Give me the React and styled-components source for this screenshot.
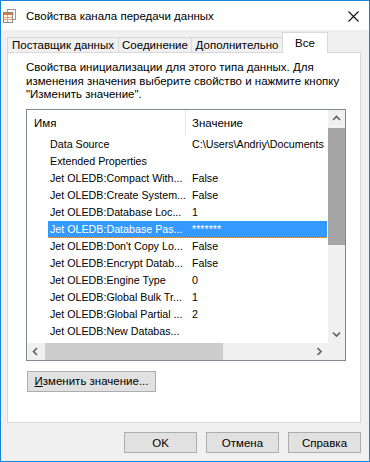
import React from 'react'
import styled, { createGlobalStyle } from 'styled-components'

const GlobalStyle = createGlobalStyle`
  html, body {
    margin: 0;
    padding: 0;
    background: #fff;
  }
  body {
    font-family: "Liberation Sans", Arial, sans-serif;
  }
`

const rows = [
  { name: 'Data Source', value: 'C:\\Users\\Andriy\\Documents' },
  { name: 'Extended Properties', value: '' },
  { name: 'Jet OLEDB:Compact With...', value: 'False' },
  { name: 'Jet OLEDB:Create System...', value: 'False' },
  { name: 'Jet OLEDB:Database Loc...', value: '1' },
  { name: 'Jet OLEDB:Database Pas...', value: '*******', selected: true },
  { name: "Jet OLEDB:Don't Copy Lo...", value: 'False' },
  { name: 'Jet OLEDB:Encrypt Datab...', value: 'False' },
  { name: 'Jet OLEDB:Engine Type', value: '0' },
  { name: 'Jet OLEDB:Global Bulk Tr...', value: '1' },
  { name: 'Jet OLEDB:Global Partial ...', value: '2' },
  { name: 'Jet OLEDB:New Databas...', value: '' }
]

const tabs = [
  { label: 'Поставщик данных', width: 112 },
  { label: 'Соединение', width: 74 },
  { label: 'Дополнительно', width: 92 },
  { label: 'Все', width: 46, active: true }
]

const Chevron = ({ dir }) => {
  const d = {
    up: 'M1 5 L4.5 1.5 L8 5',
    down: 'M1 1.5 L4.5 5 L8 1.5',
    left: 'M5 1 L1.5 4.5 L5 8',
    right: 'M1.5 1 L5 4.5 L1.5 8'
  }[dir]
  const vertical = dir === 'up' || dir === 'down'
  return (
    <svg width={vertical ? 9 : 7} height={vertical ? 7 : 9} viewBox={vertical ? '0 0 9 7' : '0 0 7 9'}>
      <path d={d} fill="none" stroke="#606060" strokeWidth="1.6" />
    </svg>
  )
}

const DialogIcon = () => (
  <svg width="13" height="14" viewBox="0 0 13 14">
    <rect x="4.5" y="0.5" width="8" height="10" fill="#fff" stroke="#9a9a9a" />
    <path d="M6 3.5 H11 M6 5.5 H11" stroke="#c4c4c4" />
    <rect x="0.5" y="3.5" width="9" height="10" fill="#fff" stroke="#8a8a8a" />
    <rect x="1" y="4" width="8" height="2" fill="#e0773a" />
    <path d="M1 8.5 H9 M1 10.5 H9 M4.5 6 V13" stroke="#e8a070" />
  </svg>
)

export default function App() {
  return (
    <>
      <GlobalStyle />
      <Window>
        <TitleBar>
          <TitleIcon>
            <DialogIcon />
          </TitleIcon>
          <Title>Свойства канала передачи данных</Title>
          <Close>
            <svg width="11" height="11" viewBox="0 0 11 11">
              <path d="M0.5 0.5 L10.5 10.5 M10.5 0.5 L0.5 10.5" stroke="#111" strokeWidth="1.1" />
            </svg>
          </Close>
        </TitleBar>
        <Body>
          <TabRow>
            {tabs.map(t => (
              <Tab key={t.label} $active={t.active} $width={t.width}>
                {t.label}
              </Tab>
            ))}
          </TabRow>
          <Panel>
            <Desc>
              <span>Свойства инициализации для этого типа данных. Для</span>
              <span>изменения значения выберите свойство и нажмите кнопку</span>
              <span>"Изменить значение".</span>
            </Desc>
            <ListView>
              <ListArea>
                <Header>
                  <HeaderCell $width={159} $divider>
                    Имя
                  </HeaderCell>
                  <HeaderCell>Значение</HeaderCell>
                </Header>
                {rows.map(r => (
                  <Row key={r.name} $selected={r.selected}>
                    <NameCell>{r.name}</NameCell>
                    <ValueCell>{r.value}</ValueCell>
                  </Row>
                ))}
              </ListArea>
              <VScroll>
                <ArrowBox>
                  <Chevron dir="up" />
                </ArrowBox>
                <VThumb />
                <Spacer />
                <ArrowBox>
                  <Chevron dir="down" />
                </ArrowBox>
              </VScroll>
              <HScroll>
                <ArrowBox>
                  <Chevron dir="left" />
                </ArrowBox>
                <HThumb />
                <Spacer />
                <ArrowBox>
                  <Chevron dir="right" />
                </ArrowBox>
              </HScroll>
              <Corner />
            </ListView>
            <EditButton>
              <u>И</u>зменить значение...
            </EditButton>
          </Panel>
          <Footer>
            <Button>OK</Button>
            <Button>Отмена</Button>
            <Button>Справка</Button>
          </Footer>
        </Body>
      </Window>
    </>
  )
}

const Window = styled.div`
  width: 370px;
  height: 462px;
  box-sizing: border-box;
  border: 1px solid #1883d7;
  display: flex;
  flex-direction: column;
  background: #f0f0f0;
  font-size: 11.5px;
  color: #000;
`

const TitleBar = styled.div`
  height: 29px;
  flex: none;
  display: flex;
  align-items: center;
  background: #fff;
  padding-left: 2px;
`

const TitleIcon = styled.div`
  width: 13px;
  height: 14px;
  margin-right: 10px;
  margin-top: 1px;
`

const Title = styled.div`
  font-size: 11.5px;
  margin-top: 1px;
`

const Close = styled.div`
  margin-left: auto;
  margin-right: 10px;
  width: 11px;
  height: 11px;
  margin-top: 1px;
`

const Body = styled.div`
  flex: 1;
  display: flex;
  flex-direction: column;
`

const TabRow = styled.div`
  height: 22px;
  display: flex;
  align-items: flex-end;
  padding-left: 6px;
  position: relative;
  z-index: 1;
`

const Tab = styled.div`
  width: ${p => p.$width}px;
  height: ${p => (p.$active ? 21 : 15)}px;
  margin-bottom: ${p => (p.$active ? -1 : 0)}px;
  box-sizing: border-box;
  display: flex;
  align-items: center;
  justify-content: center;
  border: 1px solid #d9d9d9;
  border-bottom: none;
  background: ${p => (p.$active ? '#fff' : '#f0f0f0')};
  padding-bottom: ${p => (p.$active ? 1 : 0)}px;
  & + & {
    margin-left: -1px;
  }
`

const Panel = styled.div`
  height: 371px;
  margin: 0 8px 0 6px;
  box-sizing: border-box;
  background: #fff;
  border: 1px solid #d9d9d9;
  padding: 8px 0 0 18px;
  display: flex;
  flex-direction: column;
  align-items: flex-start;
`

const Desc = styled.div`
  display: flex;
  flex-direction: column;
  line-height: 13.5px;
  white-space: nowrap;
`

const ListView = styled.div`
  margin-top: 7px;
  width: 320px;
  height: 252px;
  box-sizing: border-box;
  border: 1px solid #828790;
  background: #fff;
  display: grid;
  grid-template-columns: 1fr 17px;
  grid-template-rows: 1fr 17px;
  font-size: 10.7px;
`

const ListArea = styled.div`
  overflow: hidden;
`

const Header = styled.div`
  height: 26px;
  display: flex;
  align-items: stretch;
  font-size: 11.5px;
`

const HeaderCell = styled.div`
  width: ${p => (p.$width ? p.$width + 'px' : 'auto')};
  box-sizing: border-box;
  display: flex;
  align-items: center;
  padding-left: ${p => (p.$divider ? 7 : 6)}px;
  border-right: ${p => (p.$divider ? '1px solid #e5e5e5' : 'none')};
`

const Row = styled.div`
  height: 17px;
  width: 279px;
  margin-left: 21px;
  box-sizing: border-box;
  display: flex;
  align-items: center;
  white-space: nowrap;
  overflow: hidden;
  background: ${p => (p.$selected ? '#3399ff' : 'transparent')};
  color: ${p => (p.$selected ? '#fff' : '#000')};
  border-bottom: ${p => (p.$selected ? '1px dotted #e8a040' : 'none')};
`

const NameCell = styled.div`
  width: 137px;
  flex: none;
  padding-left: 2px;
  box-sizing: border-box;
`

const ValueCell = styled.div`
  padding-left: 7px;
`

const VScroll = styled.div`
  background: #f0f0f0;
  display: flex;
  flex-direction: column;
`

const HScroll = styled.div`
  background: #f0f0f0;
  display: flex;
`

const ArrowBox = styled.div`
  width: 17px;
  height: 17px;
  flex: none;
  display: flex;
  align-items: center;
  justify-content: center;
`

const VThumb = styled.div`
  height: 117px;
  margin-top: 1px;
  background: #a6a6a6;
`

const HThumb = styled.div`
  width: 178px;
  margin-left: 1px;
  background: #cdcdcd;
`

const Spacer = styled.div`
  flex: 1;
`

const Corner = styled.div`
  background: #f0f0f0;
`

const EditButton = styled.button`
  margin: 10px 0 0 1px;
  width: 129px;
  height: 21px;
  padding: 0;
  box-sizing: border-box;
  background: #e1e1e1;
  border: 1px solid #adadad;
  font-family: inherit;
  font-size: 11.5px;
  color: #000;
  u {
    text-decoration: underline;
  }
`

const Footer = styled.div`
  display: flex;
  justify-content: flex-end;
  gap: 9px;
  padding: 9px 8px 0 0;
`

const Button = styled.button`
  width: 73px;
  height: 21px;
  padding: 0;
  box-sizing: border-box;
  background: #e1e1e1;
  border: 1px solid #adadad;
  font-family: inherit;
  font-size: 11.5px;
  color: #000;
`
